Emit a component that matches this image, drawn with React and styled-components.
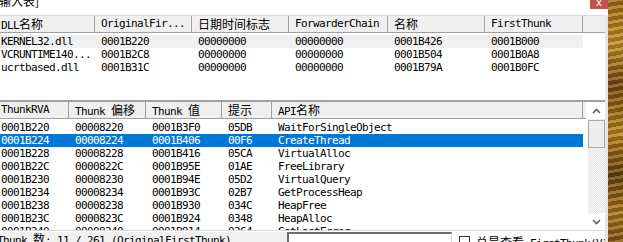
import React from 'react'
import styled, { createGlobalStyle } from 'styled-components'

const GlobalStyle = createGlobalStyle`
  html, body {
    margin: 0;
    padding: 0;
    background: #ffffff;
  }
  body {
    font-family: "DejaVu Sans Mono", "Noto Sans CJK SC", monospace;
    font-size: 11px;
    color: #000;
  }
`

const Screen = styled.div`
  display: flex;
  width: 623px;
  height: 242px;
  overflow: hidden;
`
const Window = styled.div`
  width: 608px;
  flex: none;
  display: flex;
  flex-direction: column;
  background: #e6e6e6;
  overflow: hidden;
`
const Wallpaper = styled.div`
  flex: 1;
  background:
    repeating-linear-gradient(170deg, rgba(255, 220, 120, 0.25) 0 3px, rgba(60, 30, 5, 0.25) 3px 7px),
    linear-gradient(180deg, #9a6a1c 0%, #c4922f 18%, #6d4412 35%, #b88326 55%, #5a3a10 72%, #a87422 88%, #7a5018 100%);
`
const TitleRow = styled.div`
  height: 15px;
  flex: none;
  display: flex;
  justify-content: space-between;
  align-items: flex-start;
  background: #fff;
  overflow: hidden;
`
const Caption = styled.div`
  font-family: "Noto Sans CJK SC", sans-serif;
  font-size: 12px;
  line-height: 12px;
  margin-top: -5px;
  margin-left: -1px;
`
const CloseButton = styled.div`
  width: 18px;
  height: 9px;
  background: #c75050;
  color: #fff;
  font-family: "DejaVu Sans", sans-serif;
  font-size: 10px;
  line-height: 6px;
  text-align: center;
  overflow: hidden;
`
const Pane = styled.div`
  width: 610px;
  margin-left: -5px;
  background: #fff;
  flex: none;
  overflow: hidden;
`
const DllPane = styled(Pane)`
  height: 85px;
`
const ThunkPane = styled(Pane)`
  height: 128px;
  border-top: 2px solid #a0a0a0;
  display: flex;
`
const ListArea = styled.div`
  width: 593px;
  flex: none;
  overflow: hidden;
`
const Header = styled.div`
  display: flex;
  height: ${(p) => p.$h}px;
  box-sizing: border-box;
  background: #efefef;
  border-top: ${(p) => (p.$top ? '1px solid #d8d8d8' : 'none')};
  border-bottom: 1px solid #a0a0a0;
  width: ${(p) => p.$w}px;
`
const HeadCell = styled.div`
  width: ${(p) => p.$w}px;
  flex: none;
  box-sizing: border-box;
  border-right: 1px solid #a0a0a0;
  padding-left: 6px;
  line-height: 16px;
  white-space: nowrap;
  overflow: hidden;
`
const Rows = styled.div`
  padding-top: 2px;
`
const Row = styled.div`
  display: flex;
  height: 13px;
  width: fit-content;
  background: ${(p) => (p.$selected ? '#0078d7' : p.$dim ? '#f0f0f0' : 'transparent')};
  color: ${(p) => (p.$selected ? '#fff' : '#000')};
`
const Cell = styled.div`
  width: ${(p) => p.$w}px;
  flex: none;
  box-sizing: border-box;
  padding-left: 6px;
  line-height: 13px;
  letter-spacing: -0.62px;
  white-space: nowrap;
  overflow: hidden;
`
const Han = styled.span`
  font-family: "Noto Sans CJK SC", sans-serif;
  font-size: 12px;
  letter-spacing: 0;
`
const Label = styled.span`
  letter-spacing: -0.62px;
`
const ScrollBar = styled.div`
  width: 17px;
  flex: none;
  display: flex;
  flex-direction: column;
  background-color: #f4f4f4;
  background-image: repeating-conic-gradient(#e4e4e4 0 25%, #fafafa 0 50%);
  background-size: 2px 2px;
`
const ArrowButton = styled.div`
  height: 17px;
  flex: none;
  display: flex;
  align-items: center;
  justify-content: center;
  background: #fff;
`
const Thumb = styled.div`
  height: 28px;
  flex: none;
  margin: 1px 0 0;
  box-sizing: border-box;
  border: 1px solid #a8a8a8;
  background: #ededed;
`
const Track = styled.div`
  flex: 1;
`
const StatusBar = styled(Pane)`
  flex: 1;
  min-height: 0;
  display: flex;
  align-items: flex-start;
  border-top: 1px solid #dadada;
  background: #fff;
`
const StatusText = styled.div`
  width: 292px;
  flex: none;
  padding-left: 2px;
  box-sizing: border-box;
  line-height: 14px;
  white-space: nowrap;
  letter-spacing: -0.62px;
  background: #f0f0f0;
  margin-top: 1px;
`
const TextBox = styled.div`
  width: 165px;
  height: 14px;
  flex: none;
  margin-top: 1px;
  box-sizing: border-box;
  border-top: 2px solid #6e6e6e;
  border-left: 2px solid #6e6e6e;
  border-right: 1px solid #dcdcdc;
  background: #fff;
`
const CheckRow = styled.div`
  display: flex;
  align-items: flex-start;
  gap: 6px;
  margin-left: 7px;
  margin-top: 5px;
  white-space: nowrap;
  letter-spacing: -0.62px;
  line-height: 12px;
`
const CheckBox = styled.div`
  width: 11px;
  height: 11px;
  box-sizing: border-box;
  border: 1px solid #333;
  background: #fff;
  flex: none;
`

const Chevron = ({ down }) => (
  <svg width="9" height="6" viewBox="0 0 9 6">
    <path
      d={down ? 'M1 1 L4.5 4.5 L8 1' : 'M1 5 L4.5 1.5 L8 5'}
      fill="none"
      stroke="#606060"
      strokeWidth="1.6"
    />
  </svg>
)

const dllCols = [100, 97, 97, 99, 97, 98]
const dllHead = [
  <>DLL<Han>名称</Han></>,
  'OriginalFir...',
  <Han>日期时间标志</Han>,
  'ForwarderChain',
  <Han>名称</Han>,
  'FirstThunk',
]
const dlls = [
  ['KERNEL32.dll', '0001B220', '00000000', '00000000', '0001B426', '0001B000'],
  ['VCRUNTIME140...', '0001B2C8', '00000000', '00000000', '0001B504', '0001B0A8'],
  ['ucrtbased.dll', '0001B31C', '00000000', '00000000', '0001B79A', '0001B0FC'],
]

const thunkCols = [74, 77, 76, 50, 311]
const thunkHead = [
  'ThunkRVA',
  <>Thunk <Han>偏移</Han></>,
  <>Thunk <Han>值</Han></>,
  <Han>提示</Han>,
  <>API<Han>名称</Han></>,
]
const thunks = [
  ['0001B220', '00008220', '0001B3F0', '05DB', 'WaitForSingleObject'],
  ['0001B224', '00008224', '0001B406', '00F6', 'CreateThread'],
  ['0001B228', '00008228', '0001B416', '05CA', 'VirtualAlloc'],
  ['0001B22C', '0000822C', '0001B95E', '01AE', 'FreeLibrary'],
  ['0001B230', '00008230', '0001B94E', '05D2', 'VirtualQuery'],
  ['0001B234', '00008234', '0001B93C', '02B7', 'GetProcessHeap'],
  ['0001B238', '00008238', '0001B930', '034C', 'HeapFree'],
  ['0001B23C', '0000823C', '0001B924', '0348', 'HeapAlloc'],
  ['0001B240', '00008240', '0001B914', '0264', 'GetLastError'],
]

const App = () => {
  return (
    <>
      <GlobalStyle />
      <Screen>
        <Window>
          <TitleRow>
            <Caption>输入表]</Caption>
            <CloseButton>x</CloseButton>
          </TitleRow>

          <DllPane>
            <Header $h={18} $top $w={610}>
              {dllHead.map((h, i) => (
                <HeadCell key={i} $w={dllCols[i]}><Label>{h}</Label></HeadCell>
              ))}
            </Header>
            <Rows>
              {dlls.map((row, r) => (
                <Row key={r} $dim={r === 0}>
                  {row.map((v, i) => (
                    <Cell key={i} $w={dllCols[i]}>{v}</Cell>
                  ))}
                </Row>
              ))}
            </Rows>
          </DllPane>

          <ThunkPane>
            <ListArea>
              <Header $h={17} $w={591}>
                {thunkHead.map((h, i) => (
                  <HeadCell key={i} $w={thunkCols[i]}><Label>{h}</Label></HeadCell>
                ))}
              </Header>
              <Rows>
                {thunks.map((row, r) => (
                  <Row key={r} $selected={r === 1}>
                    {row.map((v, i) => (
                      <Cell key={i} $w={thunkCols[i]}>{v}</Cell>
                    ))}
                  </Row>
                ))}
              </Rows>
            </ListArea>
            <ScrollBar>
              <ArrowButton><Chevron /></ArrowButton>
              <Thumb />
              <Track />
              <ArrowButton><Chevron down /></ArrowButton>
            </ScrollBar>
          </ThunkPane>

          <StatusBar>
            <StatusText>Thunk <Han>数</Han>: 11 / 261 (OriginalFirstThunk)</StatusText>
            <TextBox />
            <CheckRow>
              <CheckBox />
              <span><Han>总是查看</Han> FirstThunk(V)</span>
            </CheckRow>
          </StatusBar>
        </Window>
        <Wallpaper />
      </Screen>
    </>
  )
}

export default App
